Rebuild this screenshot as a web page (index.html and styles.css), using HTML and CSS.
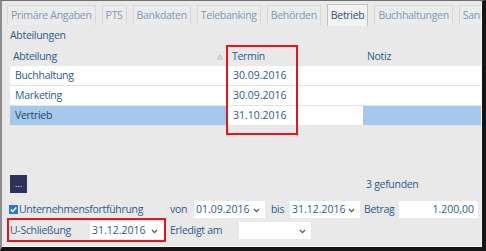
FILE: index.html
```html
<!DOCTYPE html>
<html lang="de">
<head>
<meta charset="utf-8">
<link rel="stylesheet" href="styles.css">
</head>
<body>
<div class="frame">
  <div class="inner">
    <div class="tabs">
      <span class="tab">Primäre Angaben</span>
      <span class="tab">PTS</span>
      <span class="tab">Bankdaten</span>
      <span class="tab">Telebanking</span>
      <span class="tab">Behörden</span>
      <span class="tab active">Betrieb</span>
      <span class="tab">Buchhaltungen</span>
      <span class="tab">Sanierung</span>
    </div>
    <div class="section-title">Abteilungen</div>
    <div class="grid">
      <div class="row head">
        <div class="c1">Abteilung<span class="sort"><svg width="6" height="6" viewBox="0 0 6 6"><path d="M3 0.8 L5.4 5.2 L0.6 5.2 Z" fill="none" stroke="#b5b5b5" stroke-width="0.9"/></svg></span></div>
        <div class="c2">Termin</div>
        <div class="c3">Notiz</div>
      </div>
      <div class="row">
        <div class="c1">Buchhaltung</div>
        <div class="c2 num">30.09.2016</div>
        <div class="c3"></div>
      </div>
      <div class="row">
        <div class="c1">Marketing</div>
        <div class="c2 num">30.09.2016</div>
        <div class="c3"></div>
      </div>
      <div class="row selected">
        <div class="c1">Vertrieb</div>
        <div class="c2 num">31.10.2016</div>
        <div class="c3"></div>
      </div>
    </div>
    <div class="toolbar">
      <button class="more">...</button>
      <span class="found">3 gefunden</span>
    </div>
    <div class="form-row row-a">
      <label class="check-label"><span class="checkbox"><svg width="9" height="9" viewBox="0 0 9 9"><path d="M1.8 4.6 L3.7 6.4 L7.3 2.4" fill="none" stroke="#fff" stroke-width="1.5"/></svg></span>Unternehmensfortführung</label>
      <span class="lbl lbl-von">von</span>
      <span class="select num sel-von">01.09.2016<svg class="chev" width="7" height="5" viewBox="0 0 7 5"><path d="M1 1 L3.5 3.6 L6 1" fill="none" stroke="#555" stroke-width="1.2"/></svg></span>
      <span class="lbl lbl-bis">bis</span>
      <span class="select num sel-bis">31.12.2016<svg class="chev" width="7" height="5" viewBox="0 0 7 5"><path d="M1 1 L3.5 3.6 L6 1" fill="none" stroke="#555" stroke-width="1.2"/></svg></span>
      <span class="lbl lbl-betrag">Betrag</span>
      <span class="input num amount">1.200,00</span>
    </div>
    <div class="form-row row-b">
      <span class="lbl lbl-schl">U-Schließung</span>
      <span class="select num sel-schl">31.12.2016<svg class="chev" width="7" height="5" viewBox="0 0 7 5"><path d="M1 1 L3.5 3.6 L6 1" fill="none" stroke="#555" stroke-width="1.2"/></svg></span>
      <span class="lbl lbl-erl">Erledigt am</span>
      <span class="select sel-erl"><svg class="chev" width="7" height="5" viewBox="0 0 7 5"><path d="M1 1 L3.5 3.6 L6 1" fill="none" stroke="#555" stroke-width="1.2"/></svg></span>
    </div>
  </div>
  <div class="mark mark-termin"></div>
  <div class="mark mark-schl"></div>
</div>
</body>
</html>
```
FILE: styles.css
```css
html, body {
  margin: 0;
  padding: 0;
  background: #e9e9e9;
}
body {
  font-family: "Open Sans", "Liberation Sans", sans-serif;
  font-size: 10.5px;
  letter-spacing: -0.3px;
  color: #2d5b8a;
}
.num { letter-spacing: 0; }
.frame {
  position: relative;
  width: 486px;
  height: 251px;
  box-sizing: border-box;
  border-top: 1px solid #707070;
  border-left: 2px solid #8c8c8c;
  border-right: 4px solid #151515;
  border-bottom: 4px solid #151515;
  overflow: hidden;
}
.inner {
  height: 100%;
  box-sizing: border-box;
  border-right: 1px solid #f7f7f7;
  border-bottom: 1px solid #f7f7f7;
  background: #e9e9e9;
  overflow: hidden;
}
.tabs {
  display: flex;
  gap: 6px;
  padding: 4px 0 0 5px;
  height: 21px;
  white-space: nowrap;
}
.tab {
  flex: none;
  display: block;
  height: 19px;
  line-height: 19px;
  padding: 0 3px;
  border: 1px solid #d8d8d8;
  border-bottom: none;
  background: #ebebeb;
  color: #8298b3;
}
.tab.active {
  margin-top: -1px;
  height: 21px;
  line-height: 21px;
  background: #f3f3f3;
  border-color: #c2c2c2;
  color: #2f4f74;
}
.section-title {
  padding-left: 8px;
  height: 17px;
  line-height: 17px;
  margin-top: 1px;
  color: #2d5b8a;
}
.grid {
  margin-left: 8px;
  margin-top: 3px;
}
.row {
  display: grid;
  grid-template-columns: 216px 2px 135px 1fr;
  height: 19px;
  line-height: 19px;
  border-bottom: 1px solid #e4e4e4;
  background: #fff;
}
.row .c1 { grid-column: 1; padding-left: 5px; }
.row .c2 { grid-column: 3; padding-left: 5px; }
.row .c3 { grid-column: 4; padding-left: 4px; }
.row.head {
  background: #e9e9e9;
  border-bottom: none;
}
.row.head .c1 {
  padding-left: 3px;
  display: flex;
  justify-content: space-between;
  padding-right: 3px;
}
.row.head .c2 { padding-left: 5px; border-left: 1px solid #d9e4ee; margin-left: -2px; }
.sort { display: flex; align-items: center; }
.row.selected .c1 { background: #a6c8ea; color: #24476e; }
.row.selected .c3 { background: #a6c8ea; }
.toolbar {
  display: flex;
  align-items: flex-end;
  margin-top: 49px;
  padding-left: 8px;
  height: 18px;
}
.more {
  width: 17px;
  height: 18px;
  padding: 0;
  border: none;
  background: #30305c;
  color: #e6e6f0;
  font-family: "Open Sans", sans-serif;
  font-size: 9px;
  line-height: 18px;
}
.found {
  margin-left: 339px;
  line-height: 14px;
  margin-bottom: 2px;
}
.form-row {
  display: flex;
  align-items: center;
  height: 18px;
  white-space: nowrap;
}
.row-a { margin-top: 7px; }
.row-b { margin-top: 3px; padding-left: 8px; }
.check-label {
  display: flex;
  align-items: center;
  padding-left: 7px;
  width: 161px;
}
.checkbox {
  width: 9px;
  height: 9px;
  background: #2b7bc4;
  display: flex;
  margin-right: 1px;
}
.select, .input {
  position: relative;
  display: block;
  height: 17px;
  line-height: 17px;
  background: #fff;
  color: #2d5b8a;
  padding-left: 2px;
  box-sizing: border-box;
}
.chev { position: absolute; right: 5px; top: 7px; }
.lbl-von { width: 24px; }
.sel-von { width: 71px; }
.lbl-bis { margin-left: 6px; width: 19px; }
.sel-bis { width: 70px; }
.lbl-betrag { margin-left: 4px; width: 35px; }
.amount { width: 79px; text-align: right; padding-right: 4px; }
.lbl-schl { width: 80px; }
.sel-schl { width: 73px; }
.lbl-erl { margin-left: 7px; width: 69px; }
.sel-erl { width: 72px; }
.mark {
  position: absolute;
  border: 2px solid #e8141c;
  box-sizing: border-box;
}
.mark-termin { left: 224px; top: 44px; width: 72px; height: 90px; }
.mark-schl { left: 5px; top: 217px; width: 159px; height: 24px; }
```
